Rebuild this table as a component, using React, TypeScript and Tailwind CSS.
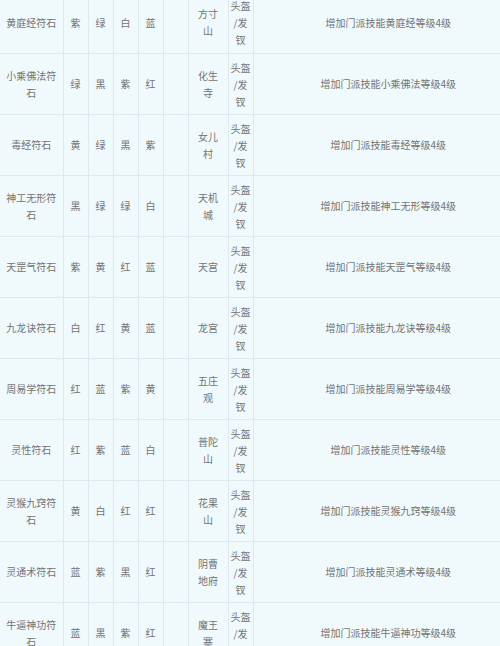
type Row = {
  name: string;
  colors: [string, string, string, string];
  school: string;
  skill: string;
};

const rows: Row[] = [
  { name: "黄庭经符石", colors: ["紫", "绿", "白", "蓝"], school: "方寸山", skill: "黄庭经" },
  { name: "小乘佛法符石", colors: ["绿", "黑", "紫", "红"], school: "化生寺", skill: "小乘佛法" },
  { name: "毒经符石", colors: ["黄", "绿", "黑", "紫"], school: "女儿村", skill: "毒经" },
  { name: "神工无形符石", colors: ["黑", "绿", "绿", "白"], school: "天机城", skill: "神工无形" },
  { name: "天罡气符石", colors: ["紫", "黄", "红", "蓝"], school: "天宫", skill: "天罡气" },
  { name: "九龙诀符石", colors: ["白", "红", "黄", "蓝"], school: "龙宫", skill: "九龙诀" },
  { name: "周易学符石", colors: ["红", "蓝", "紫", "黄"], school: "五庄观", skill: "周易学" },
  { name: "灵性符石", colors: ["红", "紫", "蓝", "白"], school: "普陀山", skill: "灵性" },
  { name: "灵猴九窍符石", colors: ["黄", "白", "红", "红"], school: "花果山", skill: "灵猴九窍" },
  { name: "灵通术符石", colors: ["蓝", "紫", "黑", "红"], school: "阴曹地府", skill: "灵通术" },
  { name: "牛逼神功符石", colors: ["蓝", "黑", "紫", "红"], school: "魔王寨", skill: "牛逼神功" },
];

export default function App() {
  return (
    <div
      className="w-[500px] h-[646px] overflow-hidden bg-[#f0f9fc]"
      style={{ fontFamily: '"Noto Sans CJK SC", "Noto Sans", sans-serif' }}
    >
      <table className="-mt-[8px] w-[523px] table-fixed border-collapse text-[10px] leading-[17px] text-[#737373]">
        <colgroup>
          <col className="w-[63px]" />
          <col className="w-[25px]" />
          <col className="w-[25px]" />
          <col className="w-[25px]" />
          <col className="w-[25px]" />
          <col className="w-[25px]" />
          <col className="w-[40px]" />
          <col className="w-[25px]" />
          <col className="w-[270px]" />
        </colgroup>
        <tbody>
          {rows.map((r) => (
            <tr key={r.name} className="h-[61px]">
              <td className="border-r border-b border-[#dde9ee] px-[4px] text-center align-middle">
                {r.name}
              </td>
              {r.colors.map((c, i) => (
                <td
                  key={i}
                  className="border-r border-b border-[#dde9ee] text-center align-middle"
                >
                  {c}
                </td>
              ))}
              <td className="border-r border-b border-[#dde9ee]" />
              <td className="border-r border-b border-[#dde9ee] px-[6px] text-center align-middle">
                {r.school}
              </td>
              <td className="border-r border-b border-[#dde9ee] pt-[4px] pb-[3px] text-center align-middle whitespace-nowrap">
                <span className="block">头盔</span>
                <span className="block">/发</span>
                <span className="block">钗</span>
              </td>
              <td className="border-b border-[#dde9ee] text-center align-middle">
                增加门派技能{r.skill}等级4级
              </td>
            </tr>
          ))}
        </tbody>
      </table>
    </div>
  );
}
